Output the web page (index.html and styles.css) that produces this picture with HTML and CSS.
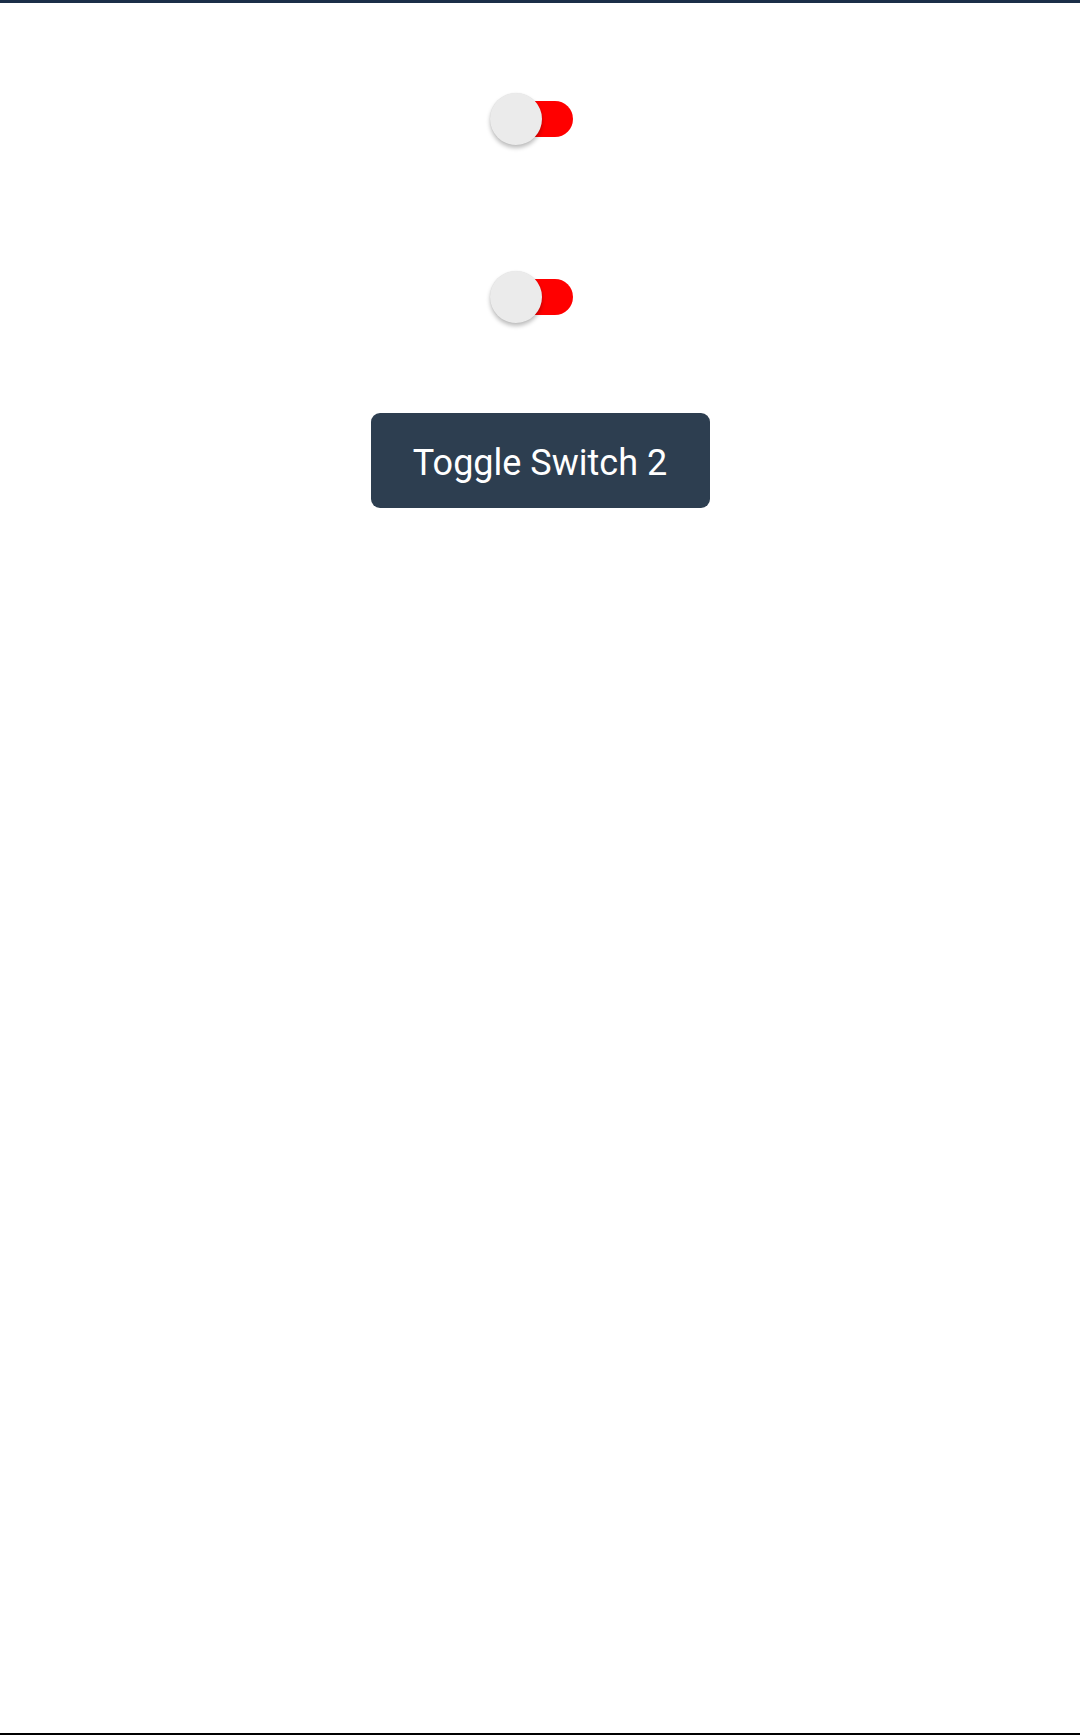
FILE: index.html
```html
<!DOCTYPE html>
<html>
<head>
<meta charset="utf-8">
<link rel="stylesheet" href="styles.css">
</head>
<body>
<div class="page">
  <div class="topbar"></div>
  <main class="content">
    <div class="switch switch-first">
      <div class="track"></div>
      <div class="thumb"></div>
    </div>
    <div class="switch switch-second">
      <div class="track"></div>
      <div class="thumb"></div>
    </div>
    <button class="btn">Toggle Switch 2</button>
  </main>
  <div class="bottomline"></div>
</div>
</body>
</html>
```

FILE: styles.css
```css
html, body {
  margin: 0;
  padding: 0;
  background: #ffffff;
  font-family: Roboto, "Liberation Sans", sans-serif;
}
.page {
  height: 1735px;
  display: flex;
  flex-direction: column;
}
.topbar {
  height: 3px;
  background: #1b2f48;
}
.content {
  flex: 1;
  display: flex;
  flex-direction: column;
  align-items: center;
}
.switch {
  position: relative;
  width: 100px;
  height: 52px;
  display: flex;
  align-items: center;
  justify-content: flex-end;
  padding-right: 17px;
  box-sizing: border-box;
}
.switch-first {
  margin-top: 90px;
}
.switch-second {
  margin-top: 126px;
}
.track {
  width: 80px;
  height: 36px;
  border-radius: 18px;
  background: #ff0000;
}
.thumb {
  position: absolute;
  left: 0;
  top: 0;
  width: 52px;
  height: 52px;
  border-radius: 50%;
  background: #ebebeb;
  box-shadow: 0 3px 4px rgba(0,0,0,0.26), 0 0 1px rgba(0,0,0,0.12);
}
.btn {
  margin-top: 90px;
  width: 339px;
  height: 95px;
  border: none;
  border-radius: 9px;
  background: #2d3e50;
  color: #ffffff;
  font-family: Roboto, "Liberation Sans", sans-serif;
  font-size: 36px;
  padding: 4px 0 0 0;
}
.bottomline {
  height: 2px;
  background: #000000;
}
```
